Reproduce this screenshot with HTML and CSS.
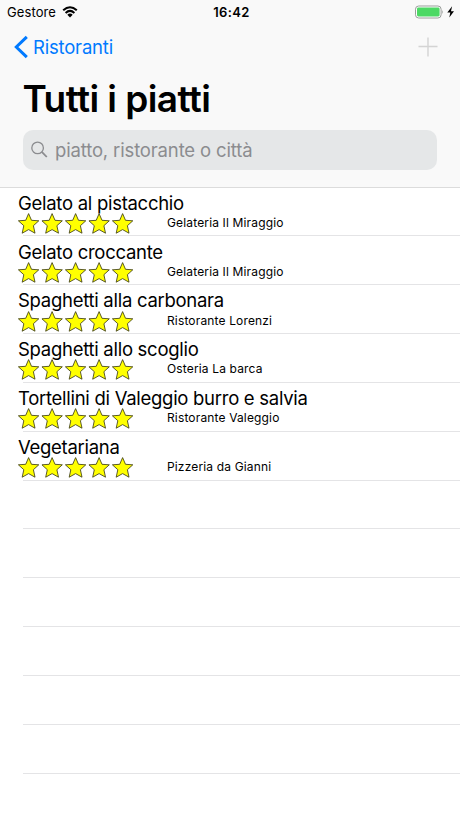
FILE: index.html
```html
<!DOCTYPE html>
<html lang="it">
<head>
  <meta charset="UTF-8">
  <meta name="viewport" content="width=device-width, initial-scale=1">
  <title>Tutti i piatti</title>
  <link rel="stylesheet" href="styles.css">
</head>
<body>
  <svg class="defs" width="0" height="0">
    <symbol id="star" viewBox="0 0 22 21">
      <path d="M10.6 0.6 L13.5 7.3 L20.8 7.8 L15.4 12.7 L17 20.2 L10.6 16.6 L4.2 20.2 L5.8 12.7 L0.4 7.8 L7.7 7.3 Z" fill="#ffff00" stroke="#3f3f18" stroke-width="0.85"/>
    </symbol>
    <symbol id="stars" viewBox="0 0 116 21">
      <use href="#star" x="0" width="22" height="21"/>
      <use href="#star" x="23.5" width="22" height="21"/>
      <use href="#star" x="47" width="22" height="21"/>
      <use href="#star" x="70.5" width="22" height="21"/>
      <use href="#star" x="94" width="22" height="21"/>
    </symbol>
  </svg>
  <header class="header">
    <div class="status-bar">
      <div class="carrier">
        <span>Gestore</span>
        <svg class="wifi" width="16" height="12" viewBox="0 0 16 12">
          <path d="M1.2 4.3 Q8 -1.9 14.8 4.3 M3.6 6.9 Q8 2.9 12.4 6.9" fill="none" stroke="#000" stroke-width="2"/>
          <path d="M5.3 8.7 Q8 6.4 10.7 8.7 L8 11.5 Z" fill="#000"/>
        </svg>
      </div>
      <div class="time">16:42</div>
      <div class="power">
        <svg width="42" height="14" viewBox="0 0 42 14">
          <rect x="1.5" y="1" width="25.6" height="12" rx="3.2" fill="#fff" stroke="#999d9a"/>
          <rect x="3" y="2.6" width="22.6" height="8.8" rx="1.4" fill="#4cd964"/>
          <path d="M28.3 5 Q30 7 28.3 9 Z" fill="#999d9a"/>
          <path d="M38.1 1.2 L33.3 7.6 H36.3 L35.3 12.6 L40 6.2 H37 Z" fill="#000"/>
        </svg>
      </div>
    </div>
    <nav class="nav">
      <a class="back">
        <svg width="15" height="24" viewBox="0 0 15 24">
          <path d="M12.8 1.8 L2.3 12 L12.8 22.2" fill="none" stroke="#007aff" stroke-width="3"/>
        </svg>
        <span>Ristoranti</span>
      </a>
      <svg class="add" width="20" height="20" viewBox="0 0 20 20">
        <path d="M10 0.5 V19.5 M0.5 9.5 H19.5" stroke="#d4d4d4" stroke-width="1.4"/>
      </svg>
    </nav>
    <h1 class="title">Tutti i piatti</h1>
    <div class="search">
      <svg width="18" height="18" viewBox="0 0 18 18">
        <path d="M10.8 10.8 L15.8 16" stroke="#8b8c8f" stroke-width="1.8"/>
        <circle cx="6.6" cy="6.9" r="5.8" fill="none" stroke="#8b8c8f" stroke-width="1.3"/>
      </svg>
      <span class="placeholder">piatto, ristorante o città</span>
    </div>
  </header>
  <ul class="list">
    <li class="row">
      <div class="dish">Gelato al pistacchio</div>
      <div class="info"><svg class="stars"><use href="#stars"/></svg><span class="place">Gelateria Il Miraggio</span></div>
    </li>
    <li class="row">
      <div class="dish">Gelato croccante</div>
      <div class="info"><svg class="stars"><use href="#stars"/></svg><span class="place">Gelateria Il Miraggio</span></div>
    </li>
    <li class="row">
      <div class="dish">Spaghetti alla carbonara</div>
      <div class="info"><svg class="stars"><use href="#stars"/></svg><span class="place">Ristorante Lorenzi</span></div>
    </li>
    <li class="row">
      <div class="dish">Spaghetti allo scoglio</div>
      <div class="info"><svg class="stars"><use href="#stars"/></svg><span class="place">Osteria La barca</span></div>
    </li>
    <li class="row">
      <div class="dish">Tortellini di Valeggio burro e salvia</div>
      <div class="info"><svg class="stars"><use href="#stars"/></svg><span class="place">Ristorante Valeggio</span></div>
    </li>
    <li class="row">
      <div class="dish">Vegetariana</div>
      <div class="info"><svg class="stars"><use href="#stars"/></svg><span class="place">Pizzeria da Gianni</span></div>
    </li>
    <li class="row"></li>
    <li class="row"></li>
    <li class="row"></li>
    <li class="row"></li>
    <li class="row"></li>
    <li class="row"></li>
  </ul>
</body>
</html>
```
FILE: styles.css
```css
* {
  box-sizing: border-box;
}

body {
  margin: 0;
  height: 818px;
  overflow: hidden;
  background: #fff;
  color: #000;
  font-family: Inter, "Liberation Sans", sans-serif;
}

.defs {
  position: absolute;
}

.header {
  height: 187.6px;
  background: #f9f9f9;
  border-bottom: 1px solid #dcdcdc;
}

.status-bar {
  display: grid;
  grid-template-columns: 1fr auto 1fr;
  align-items: center;
  height: 24px;
  padding: 0 4px 0 7px;
  font-size: 13px;
}

.carrier {
  display: flex;
  align-items: center;
  gap: 6px;
  letter-spacing: 0.1px;
}

.time {
  font-weight: 600;
  letter-spacing: 0.4px;
}

.power {
  display: flex;
  justify-content: flex-end;
}

.nav {
  display: flex;
  justify-content: space-between;
  align-items: center;
  height: 46px;
  padding: 0 22px 0 14px;
}

.back {
  display: flex;
  align-items: center;
  gap: 4px;
  color: #007aff;
  font-size: 18.5px;
  letter-spacing: -0.2px;
}

.title {
  margin: 0;
  height: 60px;
  padding-left: 22.5px;
  font-size: 37px;
  line-height: 57px;
  font-weight: 600;
  letter-spacing: -0.58px;
}

.search {
  display: flex;
  align-items: center;
  gap: 6px;
  height: 40px;
  margin: 0 23px;
  padding-left: 8px;
  border-radius: 10px;
  background: #e5e7e8;
  color: #8b8c8f;
}

.placeholder {
  font-size: 18.5px;
  letter-spacing: -0.15px;
}

.list {
  margin: 0;
  padding: 0;
  list-style: none;
}

/* separators start at the inset, text a little before it */
.row {
  height: 48.84px;
  padding: 3.2px 0 0 18px;
  background: linear-gradient(#e4e4e6, #e4e4e6) 23px 100% / 100% 1px no-repeat;
}

.dish {
  height: 22.2px;
  font-size: 18.5px;
  line-height: 24px;
  letter-spacing: -0.28px;
  white-space: nowrap;
}

.info {
  display: flex;
}

.stars {
  width: 116px;
  height: 21px;
}

.place {
  margin-left: 33px;
  font-size: 12px;
  line-height: 19px;
  letter-spacing: 0.15px;
}
```
